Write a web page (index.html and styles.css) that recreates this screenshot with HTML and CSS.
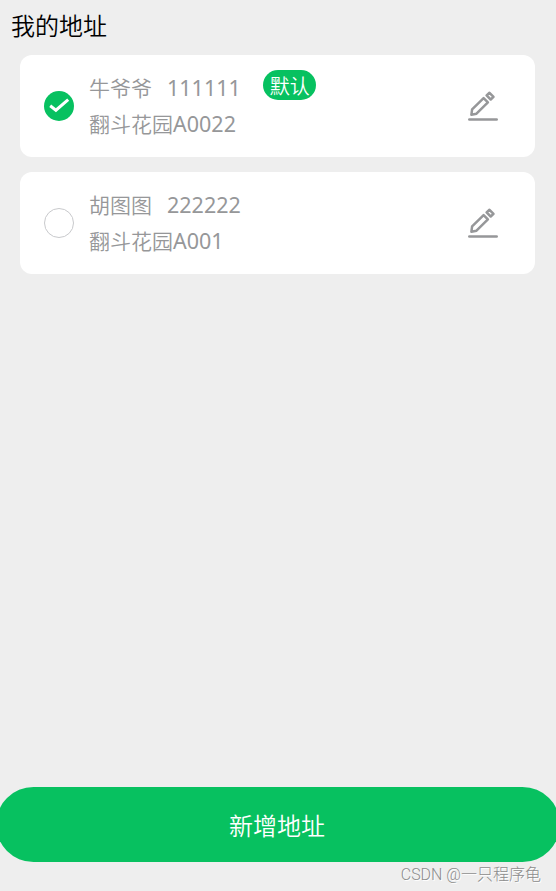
FILE: index.html
```html
<!DOCTYPE html>
<html lang="zh-CN">
<head>
<meta charset="utf-8">
<title>我的地址</title>
<link rel="stylesheet" href="styles.css">
</head>
<body>
<main class="page">
  <h1 class="title">我的地址</h1>
  <section class="list">
    <article class="card">
      <svg class="radio" viewBox="0 0 30 30"><circle cx="15" cy="15" r="15" fill="#07c160"/><path d="M6.2 14.8 11.9 19.2 24.2 8.6" fill="none" stroke="#fff" stroke-width="3"/></svg>
      <div class="info">
        <div class="row"><span class="name">牛爷爷</span><span class="phone">111111</span><span class="tag">默认</span></div>
        <div class="row"><span class="street">翻斗花园</span><span class="num">A0022</span></div>
      </div>
      <svg class="edit" viewBox="0 0 30 30"><g fill="none" stroke="#969799" stroke-width="2.5" stroke-linejoin="round"><path d="M1.3 28.5H28.7" stroke-linecap="round"/><path d="M3.4 23.7 4.1 18.4 15.6 7.1 19.9 11.4 8.5 22.7Z"/><path d="M18.6 4.4 21.5 1.8 25.5 5.8 22.7 8.5Z"/></g></svg>
    </article>
    <article class="card">
      <svg class="radio" viewBox="0 0 30 30"><circle cx="15" cy="15" r="14.5" fill="#fff" stroke="#c8c9cc"/></svg>
      <div class="info">
        <div class="row"><span class="name">胡图图</span><span class="phone">222222</span></div>
        <div class="row"><span class="street">翻斗花园</span><span class="num">A001</span></div>
      </div>
      <svg class="edit" viewBox="0 0 30 30"><g fill="none" stroke="#969799" stroke-width="2.5" stroke-linejoin="round"><path d="M1.3 28.5H28.7" stroke-linecap="round"/><path d="M3.4 23.7 4.1 18.4 15.6 7.1 19.9 11.4 8.5 22.7Z"/><path d="M18.6 4.4 21.5 1.8 25.5 5.8 22.7 8.5Z"/></g></svg>
    </article>
  </section>
  <button class="add">新增地址</button>
  <footer class="mark"><span class="latin">CSDN @</span>一只程序龟</footer>
</main>
</body>
</html>
```
FILE: styles.css
```css
* { box-sizing: border-box; }
body {
  margin: 0;
  background: #eee;
  font-family: "Noto Sans CJK SC", sans-serif;
}
.page {
  height: 891px;
  display: flex;
  flex-direction: column;
  overflow: hidden;
}
.title {
  margin: 0;
  height: 55px;
  padding: 7px 0 0 11px;
  font-size: 24px;
  line-height: 36px;
  font-weight: 350;
  color: #000;
}
.list {
  display: flex;
  flex-direction: column;
  gap: 15px;
  padding: 0 21px 0 20px;
}
.card {
  display: flex;
  align-items: center;
  height: 102px;
  padding: 0 37px 0 24px;
  border-radius: 12px;
  background: #fff;
}
.radio, .edit { width: 30px; height: 30px; flex: none; }
.info { flex: 1; margin-left: 15px; }
.row {
  display: flex;
  align-items: center;
  height: 36px;
  font-size: 21px;
  line-height: 36px;
  color: #969799;
  white-space: nowrap;
}
.name, .street { margin-top: -2px; font-weight: 350; }
.phone, .num {
  font-family: "Noto Sans", sans-serif;
  font-size: 21.5px;
  font-weight: 400;
}
.phone { margin-left: 15px; }
.tag {
  height: 30px;
  margin: -6px 0 0 22px;
  padding: 0 6px 0 7px;
  border-radius: 15px;
  background: #07c160;
  color: #fff;
  font-size: 20px;
  line-height: 32px;
  font-weight: 350;
}
.add {
  flex: none;
  height: 75px;
  margin: auto -4px 0;
  padding: 0 2px 0 0;
  border: 0;
  border-radius: 38px;
  background: #07c160;
  color: #fff;
  font: 350 24px/73px "Noto Sans CJK SC", sans-serif;
}
.mark {
  height: 29px;
  padding-right: 15px;
  text-align: right;
  font-size: 16px;
  font-weight: 300;
  line-height: 23px;
  color: #8c8c8c;
  text-shadow: 1px 1px 0 #fff;
}
.latin { font-family: Roboto, sans-serif; }
```
